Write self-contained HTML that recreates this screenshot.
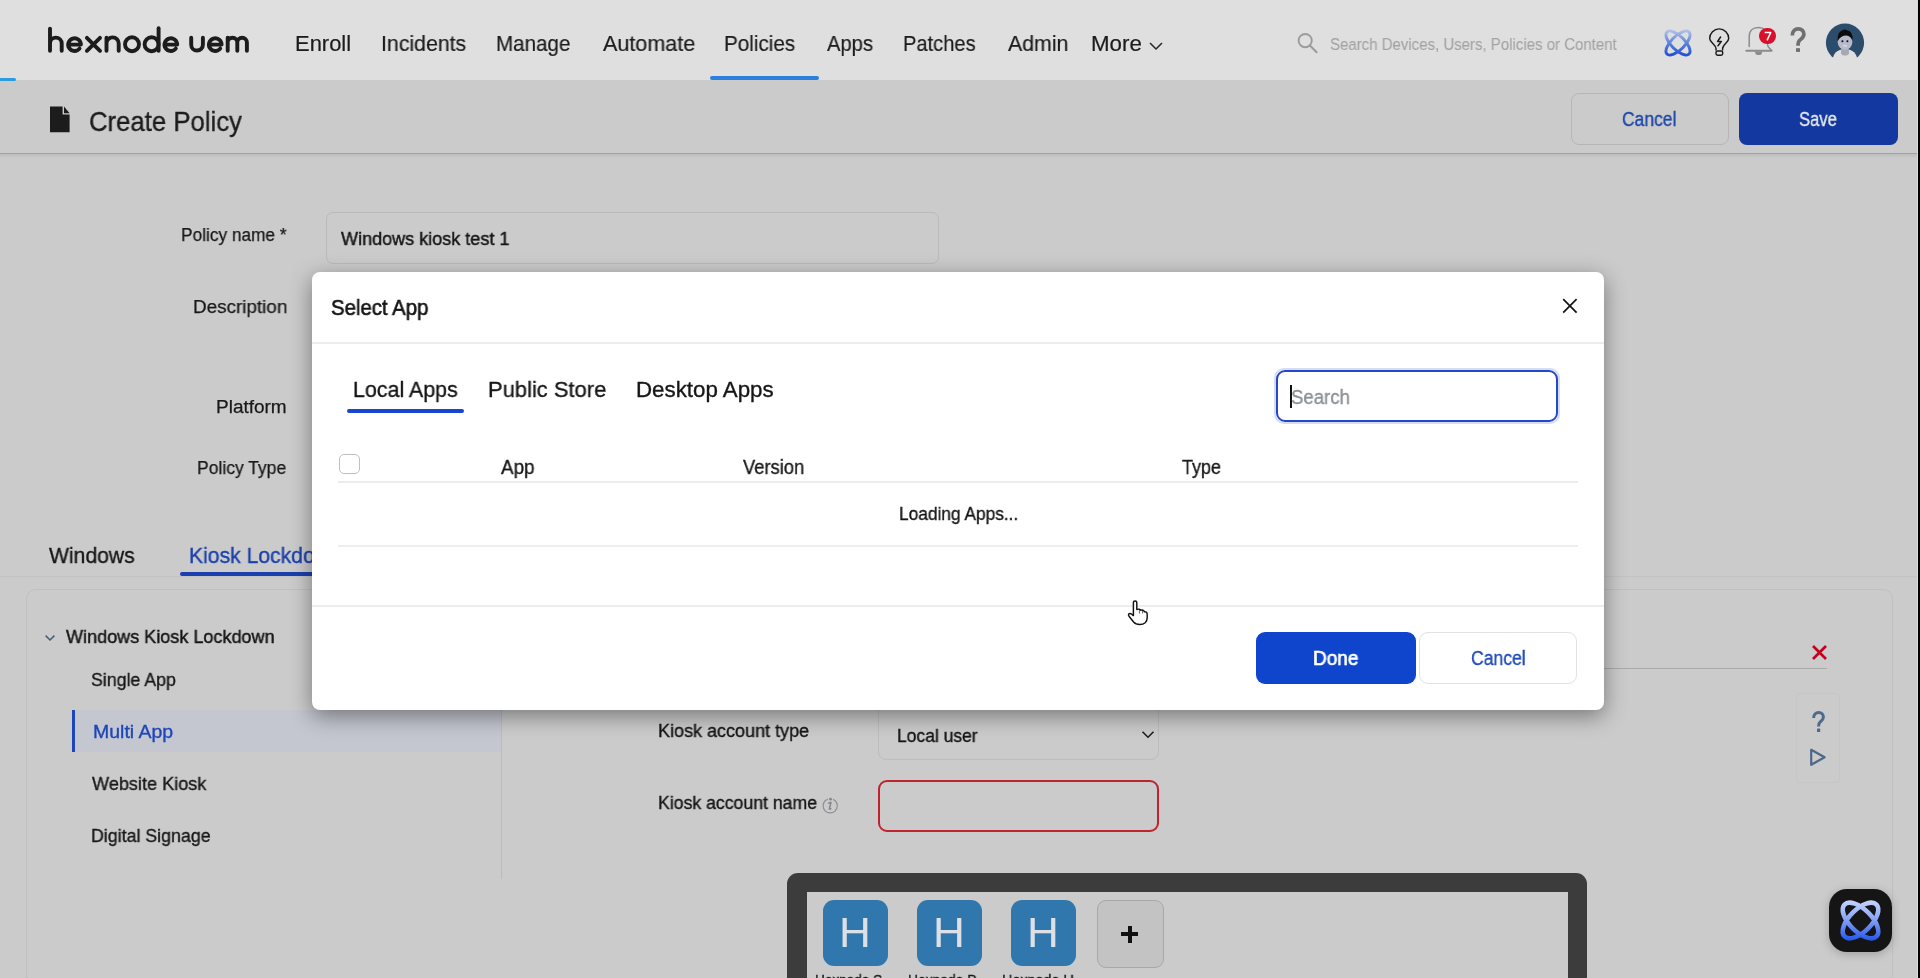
<!DOCTYPE html>
<html><head><meta charset="utf-8"><title>Create Policy</title>
<style>
html,body{margin:0;padding:0;}
body{width:1920px;height:978px;overflow:hidden;position:relative;background:#cbcbcb;font-family:"Liberation Sans",sans-serif;}
.a{position:absolute;box-sizing:border-box;}
.t{position:absolute;white-space:nowrap;line-height:1;transform-origin:0 0;font-family:"Liberation Sans",sans-serif;-webkit-text-stroke:0.35px currentColor;will-change:transform;}
</style></head><body>
<!-- header -->
<div class="a" style="left:0;top:0;width:1920px;height:80px;background:#dfdfdf"></div>
<div class="a" style="left:0;top:78px;width:16px;height:3px;background:#2f9ae0;border-radius:0 2px 2px 0"></div>
<div class="a" style="left:710px;top:76px;width:109px;height:4px;background:#2d80df;border-radius:2px"></div>
<svg style="position:absolute;left:0;top:0" width="260" height="80" viewBox="0 0 260 80">
<g fill="none" stroke="#1c1c1c" stroke-width="3.9" stroke-linecap="round" stroke-linejoin="round">
<path d="M50,28.6 V50.8 M50,43.45 A5.85,5.85 0 0 1 61.7,43.45 V50.8"/>
<path d="M68.2,44.6 H80.9 A6.35,6.35 0 1 0 79.5,48.6"/>
<path d="M86.9,37.8 L100,50.8 M100,37.8 L86.9,50.8"/>
<path d="M106.5,37.8 V50.8 M106.5,43.45 A6.1,6.1 0 0 1 118.7,43.45 V50.8"/>
<circle cx="132" cy="44.25" r="7.0"/>
<circle cx="151.6" cy="44.25" r="7.0"/>
<path d="M158.6,28.3 V50.8"/>
<path d="M164.5,44.6 H177.2 A6.35,6.35 0 1 0 175.8,48.6"/>
<path d="M191.2,37.8 V44.65 A5.85,5.85 0 0 0 202.9,44.65 V37.8"/>
<path d="M208.9,44.6 H221.6 A6.35,6.35 0 1 0 220.2,48.6"/>
<path d="M227.7,37.8 V50.8 M227.7,42.6 A4.8,4.8 0 0 1 237.3,42.6 V50.8 M237.3,42.6 A4.8,4.8 0 0 1 246.9,42.6 V50.8"/>
</g></svg>
<svg class="a" style="left:1146px;top:38px" width="20" height="16" viewBox="0 0 20 16"><path d="M4,5 L10,11 L16,5" fill="none" stroke="#262626" stroke-width="1.5"/></svg>
<svg class="a" style="left:1294px;top:29px" width="28" height="28" viewBox="0 0 28 28"><circle cx="11.2" cy="11.6" r="6.6" fill="none" stroke="#9c9c9c" stroke-width="1.9"/><path d="M16,16.6 L22.6,23.2" stroke="#9c9c9c" stroke-width="2.1" stroke-linecap="round"/></svg>
<!-- atom icon -->
<svg class="a" style="left:1662px;top:27px" width="32" height="32" viewBox="0 0 32 32">
<defs><linearGradient id="ag" gradientUnits="userSpaceOnUse" x1="0" y1="3" x2="0" y2="29"><stop offset="0" stop-color="#b3c3ea"/><stop offset="0.5" stop-color="#5d82dc"/><stop offset="1" stop-color="#1f4fd2"/></linearGradient>
<mask id="am" maskUnits="userSpaceOnUse" x="0" y="0" width="32" height="32"><g fill="none" stroke="#fff" stroke-width="2.9"><ellipse cx="16" cy="16" rx="15.6" ry="6.8" transform="rotate(45 16 16)"/><ellipse cx="16" cy="16" rx="15.6" ry="6.8" transform="rotate(-45 16 16)"/></g></mask></defs>
<rect x="0" y="0" width="32" height="32" fill="url(#ag)" mask="url(#am)"/></svg>
<!-- bulb -->
<svg class="a" style="left:1700px;top:22px" width="40" height="40" viewBox="0 0 40 40">
<path d="M16,28.6 V26.6 C16,24.4 14.8,23.4 12.6,21.2 C10.6,19.2 9.7,17.3 9.7,16.4 A9.5,9.5 0 1 1 28.7,16.4 C28.7,17.3 27.8,19.2 25.8,21.2 C23.6,23.4 22.6,24.4 22.6,26.6 V28.6" fill="none" stroke="#1a1a1a" stroke-width="1.45" stroke-linejoin="round"/>
<rect x="16" y="28.9" width="6.7" height="4.3" rx="1.6" fill="none" stroke="#1a1a1a" stroke-width="1.45"/>
<path d="M20.6,15 L17.6,19.4 H21.4 L18,23.8" fill="none" stroke="#1a1a1a" stroke-width="1.5" stroke-linejoin="round" stroke-linecap="round"/>
</svg>
<!-- bell -->
<svg class="a" style="left:1740px;top:22px" width="40" height="40" viewBox="0 0 40 40">
<path d="M9.2,24.4 V14.5 C9.2,8.6 13,5.4 18.4,5.4 C23.8,5.4 27.6,8.6 27.6,14.5 V23 C27.6,25.2 29.8,26.6 31.2,28" fill="none" stroke="#8c8c8c" stroke-width="1.5" stroke-linecap="round"/>
<path d="M6.3,28.8 H31.6" stroke="#8c8c8c" stroke-width="2" stroke-linecap="round"/>
<path d="M15,29.4 A3.6,3.6 0 0 0 22.2,29.4 Z" fill="#8c8c8c"/>
</svg>
<div class="a" style="left:1759.3px;top:27.5px;width:16.5px;height:16.5px;border-radius:50%;background:#d7102c"></div>
<svg class="a" style="left:1760px;top:28px" width="16" height="16" viewBox="0 0 16 16"><path d="M4.6,4.6 H10.7 L7,12.4" fill="none" stroke="#fafafa" stroke-width="1.5" stroke-linejoin="round"/></svg>
<svg class="a" style="left:1780px;top:22px" width="40" height="40" viewBox="0 0 40 40">
<path d="M12.3,13.6 C12.3,9.2 15,6.8 18.3,6.8 C21.7,6.8 23.9,9.1 23.9,12.3 C23.9,15.3 21.6,16.7 19.8,18.2 C18.5,19.3 18,20.6 18,23.8" fill="none" stroke="#707070" stroke-width="3.7"/>
<rect x="16" y="26.2" width="4" height="3.7" fill="#707070"/>
</svg>
<!-- avatar -->
<svg class="a" style="left:1820px;top:18px" width="50" height="50" viewBox="0 0 50 50">
<defs><clipPath id="avc"><circle cx="25" cy="24.7" r="19.1"/></clipPath></defs>
<circle cx="25" cy="24.7" r="19.1" fill="#2b4c6b"/>
<path d="M12.6,47 V43 Q13,31.5 25,31 Q37,31.5 37.4,43 V47 Z" fill="#dfdfdf"/>
<rect x="21" y="29.5" width="8" height="8" rx="3.2" fill="#a6a8b3"/>
<ellipse cx="25" cy="23.8" rx="7.4" ry="7.9" fill="#b7bacb"/>
<path d="M17.6,23.5 Q16.8,14.5 22,12.5 Q24.5,10.6 27,12.2 Q33.5,13 32.4,23 Q30.6,17.8 26.5,17.6 Q20.5,17.5 17.6,23.5 Z" fill="#0c0c0c"/>
<circle cx="22.4" cy="23.3" r="1.05" fill="#0c0c0c"/><circle cx="27.4" cy="23.3" r="1.05" fill="#0c0c0c"/>
<path d="M22.3,27.4 Q25,29.6 27.7,27.4 Z" fill="#f0f0f0"/>
</svg>

<!-- sub bar -->
<div class="a" style="left:0;top:153px;width:1920px;height:1px;background:#a3a3a3"></div>
<div class="a" style="left:0;top:154px;width:1920px;height:4px;background:linear-gradient(#bdbdbd,#cbcbcb)"></div>
<svg class="a" style="left:48px;top:104px" width="26" height="32" viewBox="0 0 26 32">
<path d="M2,2.5 H14.6 V10.5 H21.6 V28.2 H2 Z" fill="#1c1c1c"/><path d="M16,2.5 L21.6,9.2 H16 Z" fill="#1c1c1c"/></svg>
<div class="a" style="left:1571px;top:93px;width:158px;height:52px;border:1px solid #b6b6b6;border-radius:8px"></div>
<div class="a" style="left:1739px;top:93px;width:159px;height:52px;background:#1339a1;border-radius:8px"></div>

<!-- form -->
<div class="a" style="left:326px;top:212px;width:613px;height:52px;border:1px solid #bababa;border-radius:7px"></div>

<!-- tabs -->
<div class="a" style="left:0;top:576px;width:1920px;height:1px;background:#c3c3c3"></div>
<div class="a" style="left:180px;top:572px;width:150px;height:4px;background:#1b40ad;border-radius:2px"></div>

<!-- card -->
<div class="a" style="left:26px;top:589px;width:1867px;height:500px;border:1px solid #c0c0c0;border-radius:10px"></div>
<div class="a" style="left:72px;top:710px;width:429px;height:42px;background:#c4c6d0"></div>
<div class="a" style="left:72px;top:710px;width:2.6px;height:42px;background:#1d46b8"></div>
<div class="a" style="left:501px;top:590px;width:1px;height:289px;background:#bcbcbc"></div>
<svg class="a" style="left:42px;top:630px" width="16" height="16" viewBox="0 0 16 16"><path d="M3.6,5.6 L8,10 L12.4,5.6" fill="none" stroke="#4a5a78" stroke-width="1.5"/></svg>

<!-- right side -->
<div class="a" style="left:1300px;top:668px;width:527px;height:1px;background:#aaaaaa"></div>
<svg class="a" style="left:1808px;top:641px" width="22" height="22" viewBox="0 0 22 22"><path d="M5,5 L18,18 M18,5 L5,18" stroke="#c6001c" stroke-width="2.7"/></svg>
<div class="a" style="left:1796px;top:693px;width:44px;height:90px;border:1px solid #c6c6c6;border-radius:3px"></div>
<svg class="a" style="left:1800px;top:705px" width="36" height="32" viewBox="0 0 36 32">
<path d="M13.6,13 C13.6,9.6 15.8,7.6 18.6,7.6 C21.5,7.6 23.4,9.5 23.4,12.2 C23.4,14.6 21.6,15.8 20.1,17 C19,17.9 18.6,19 18.6,21.4" fill="none" stroke="#4e6a8d" stroke-width="3"/>
<rect x="17" y="23.6" width="3.2" height="3.4" rx="0.6" fill="#4e6a8d"/></svg>
<svg class="a" style="left:1806px;top:745px" width="24" height="24" viewBox="0 0 24 24"><path d="M5.2,4.8 L18.6,12.3 L5.2,19.8 Z" fill="none" stroke="#4d6789" stroke-width="2.2" stroke-linejoin="round"/></svg>

<!-- content -->
<div class="a" style="left:878px;top:700px;width:281px;height:60px;border:1px solid #bdbdbd;border-radius:8px"></div>
<svg class="a" style="left:1139px;top:727px" width="18" height="16" viewBox="0 0 18 16"><path d="M3.5,4.7 L9,10.2 L14.5,4.7" fill="none" stroke="#1e1e1e" stroke-width="1.6"/></svg>
<div class="a" style="left:878px;top:780px;width:281px;height:52px;border:2px solid #c2212e;border-radius:9px"></div>
<svg class="a" style="left:820px;top:795px" width="20" height="20" viewBox="0 0 20 20"><circle cx="10.2" cy="10.8" r="7.1" fill="none" stroke="#8e8e94" stroke-width="1.15"/><circle cx="10.4" cy="4" r="2.6" fill="#cbcbcb"/><circle cx="10.5" cy="4.2" r="1.4" fill="#86868c"/><path d="M8.6,8.2 Q10,7.3 11,7.5 L9.4,13.6 Q9.2,14.8 10.8,13.6" fill="none" stroke="#86868c" stroke-width="1.5" stroke-linecap="round" stroke-linejoin="round"/></svg>

<!-- device -->
<div class="a" style="left:787px;top:873px;width:800px;height:200px;background:#3c3c3c;border-radius:11px"></div>
<div class="a" style="left:807px;top:892px;width:761px;height:200px;background:#cbcbcb"></div>
<div class="a" style="left:823px;top:900px;width:65px;height:66px;background:#2f77ad;border-radius:11px"></div>
<div class="a" style="left:916.6px;top:900px;width:65px;height:66px;background:#2f77ad;border-radius:11px"></div>
<div class="a" style="left:1010.6px;top:900px;width:65px;height:66px;background:#2f77ad;border-radius:11px"></div>
<div class="a" style="left:1097px;top:900px;width:67px;height:68px;background:#c3c3c3;border:1.5px solid #a8a8a8;border-radius:9px"></div>
<div class="a" style="left:1121px;top:932.3px;width:17px;height:4px;background:#111"></div>
<div class="a" style="left:1127.5px;top:925.8px;width:4px;height:17px;background:#111"></div>

<!-- floating atom -->
<div class="a" style="left:1829px;top:889px;width:63px;height:63px;background:#151515;border-radius:18px;box-shadow:0 2px 10px rgba(0,0,0,0.22)"></div>
<svg class="a" style="left:1836px;top:896px" width="49" height="49" viewBox="0 0 49 49">
<defs><linearGradient id="fg" gradientUnits="userSpaceOnUse" x1="0" y1="4" x2="0" y2="45"><stop offset="0" stop-color="#c9d5ff"/><stop offset="0.45" stop-color="#8aa6f6"/><stop offset="1" stop-color="#2254ec"/></linearGradient>
<mask id="fm" maskUnits="userSpaceOnUse" x="0" y="0" width="49" height="49"><g fill="none" stroke="#fff" stroke-width="4.6"><ellipse cx="24.5" cy="24.5" rx="22.6" ry="11" transform="rotate(45 24.5 24.5)"/><ellipse cx="24.5" cy="24.5" rx="22.6" ry="11" transform="rotate(-45 24.5 24.5)"/></g></mask></defs>
<rect x="0" y="0" width="49" height="49" fill="url(#fg)" mask="url(#fm)"/></svg>

<!-- right edge -->
<div class="a" style="left:1917px;top:0;width:1px;height:978px;background:#dadada"></div>
<div class="a" style="left:1918px;top:0;width:2px;height:978px;background:#000"></div>

<div class="t" style="left:295.18px;top:32.77px;font-size:21.74px;color:#1c1c1c;font-weight:400;transform:scaleX(1.0096);-webkit-text-stroke:0.2px currentColor">Enroll</div>
<div class="t" style="left:381.04px;top:32.77px;font-size:21.74px;color:#1c1c1c;font-weight:400;transform:scaleX(0.9798);-webkit-text-stroke:0.2px currentColor">Incidents</div>
<div class="t" style="left:496.41px;top:32.77px;font-size:21.74px;color:#1c1c1c;font-weight:400;transform:scaleX(0.9474);-webkit-text-stroke:0.2px currentColor">Manage</div>
<div class="t" style="left:602.50px;top:32.77px;font-size:21.74px;color:#1c1c1c;font-weight:400;transform:scaleX(0.9913);-webkit-text-stroke:0.2px currentColor">Automate</div>
<div class="t" style="left:724.40px;top:32.77px;font-size:21.74px;color:#1c1c1c;font-weight:400;transform:scaleX(0.9500);-webkit-text-stroke:0.2px currentColor">Policies</div>
<div class="t" style="left:826.70px;top:32.77px;font-size:21.74px;color:#1c1c1c;font-weight:400;transform:scaleX(0.9286);-webkit-text-stroke:0.2px currentColor">Apps</div>
<div class="t" style="left:903.15px;top:32.77px;font-size:21.74px;color:#1c1c1c;font-weight:400;transform:scaleX(0.9250);-webkit-text-stroke:0.2px currentColor">Patches</div>
<div class="t" style="left:1007.50px;top:32.77px;font-size:21.74px;color:#1c1c1c;font-weight:400;transform:scaleX(0.9800);-webkit-text-stroke:0.2px currentColor">Admin</div>
<div class="t" style="left:1090.94px;top:32.77px;font-size:21.74px;color:#1c1c1c;font-weight:400;transform:scaleX(1.0277);-webkit-text-stroke:0.2px currentColor">More</div>
<div class="t" style="left:1330.12px;top:35.62px;font-size:17.1px;color:#a3a3a3;font-weight:400;transform:scaleX(0.8773);-webkit-text-stroke:0.1px currentColor">Search Devices, Users, Policies or Content</div>
<div class="t" style="left:88.58px;top:108.19px;font-size:27.83px;color:#1c1c1c;font-weight:400;transform:scaleX(0.9244)">Create Policy</div>
<div class="t" style="left:1622.02px;top:109.57px;font-size:19.86px;color:#1f47a8;font-weight:400;transform:scaleX(0.8800)">Cancel</div>
<div class="t" style="left:1799.36px;top:109.57px;font-size:19.86px;color:#e6e8ee;font-weight:400;transform:scaleX(0.8364)">Save</div>
<div class="t" style="left:180.79px;top:225.11px;font-size:18.99px;color:#181818;font-weight:400;transform:scaleX(0.9091);-webkit-text-stroke:0.25px currentColor">Policy name *</div>
<div class="t" style="left:192.91px;top:296.91px;font-size:18.99px;color:#181818;font-weight:400;transform:scaleX(0.9935);-webkit-text-stroke:0.25px currentColor">Description</div>
<div class="t" style="left:216.40px;top:397.01px;font-size:18.99px;color:#181818;font-weight:400;transform:scaleX(0.9986);-webkit-text-stroke:0.25px currentColor">Platform</div>
<div class="t" style="left:197.48px;top:458.31px;font-size:18.99px;color:#181818;font-weight:400;transform:scaleX(0.9221);-webkit-text-stroke:0.25px currentColor">Policy Type</div>
<div class="t" style="left:341.25px;top:229.11px;font-size:18.99px;color:#161616;font-weight:400;transform:scaleX(0.9500);-webkit-text-stroke:0.45px currentColor">Windows kiosk test 1</div>
<div class="t" style="left:48.80px;top:544.77px;font-size:21.74px;color:#161616;font-weight:400;transform:scaleX(0.9727)">Windows</div>
<div class="t" style="left:188.95px;top:544.77px;font-size:21.74px;color:#1b40ad;font-weight:400;transform:scaleX(0.9727)">Kiosk Lockdown</div>
<div class="t" style="left:65.50px;top:628.44px;font-size:18.84px;color:#161616;font-weight:400;transform:scaleX(0.9585);-webkit-text-stroke:0.45px currentColor">Windows Kiosk Lockdown</div>
<div class="t" style="left:90.66px;top:670.64px;font-size:18.84px;color:#181818;font-weight:400;transform:scaleX(0.9432)">Single App</div>
<div class="t" style="left:93.06px;top:722.94px;font-size:18.84px;color:#1d46b8;font-weight:400;transform:scaleX(1.0355)">Multi App</div>
<div class="t" style="left:91.60px;top:774.64px;font-size:18.84px;color:#181818;font-weight:400;transform:scaleX(0.9613)">Website Kiosk</div>
<div class="t" style="left:90.66px;top:827.04px;font-size:18.84px;color:#181818;font-weight:400;transform:scaleX(0.9440)">Digital Signage</div>
<div class="t" style="left:658.41px;top:722.43px;font-size:18.26px;color:#161616;font-weight:400;transform:scaleX(0.9862)">Kiosk account type</div>
<div class="t" style="left:658.43px;top:794.23px;font-size:18.26px;color:#161616;font-weight:400;transform:scaleX(0.9675)">Kiosk account name</div>
<div class="t" style="left:896.56px;top:726.68px;font-size:18.55px;color:#141414;font-weight:400;transform:scaleX(0.9429)">Local user</div>
<div class="t" style="left:814.71px;top:971.51px;font-size:15.22px;color:#181818;font-weight:400;transform:scaleX(0.8905)">Hexnode S</div>
<div class="t" style="left:908.49px;top:971.51px;font-size:15.22px;color:#181818;font-weight:400;transform:scaleX(0.9081)">Hexnode P</div>
<div class="t" style="left:1002.06px;top:971.51px;font-size:15.22px;color:#181818;font-weight:400;transform:scaleX(0.9419)">Hexnode U</div>
<div class="t" style="left:839.05px;top:911.72px;font-size:42.03px;color:#dde1e6;font-weight:400;transform:scaleX(1.0500);-webkit-text-stroke:0px currentColor">H</div>
<div class="t" style="left:932.65px;top:911.72px;font-size:42.03px;color:#dde1e6;font-weight:400;transform:scaleX(1.0500);-webkit-text-stroke:0px currentColor">H</div>
<div class="t" style="left:1026.65px;top:911.72px;font-size:42.03px;color:#dde1e6;font-weight:400;transform:scaleX(1.0500);-webkit-text-stroke:0px currentColor">H</div>
<!-- modal -->
<div class="a" style="left:312px;top:272px;width:1292px;height:438px;background:#fff;border-radius:8px;box-shadow:0 6px 22px rgba(0,0,0,0.42)"></div>
<div class="a" style="left:312px;top:342px;width:1292px;height:2px;background:#ececec"></div>
<svg class="a" style="left:1560px;top:296px" width="20" height="20" viewBox="0 0 20 20"><path d="M3.2,3.2 L16.6,16.6 M16.6,3.2 L3.2,16.6" stroke="#141414" stroke-width="1.7"/></svg>
<div class="a" style="left:347px;top:408.6px;width:117px;height:4px;background:#1a45d0;border-radius:2px"></div>
<div class="a" style="left:1274px;top:368px;width:286px;height:56px;border:2px solid #d4ddf7;border-radius:10px"></div>
<div class="a" style="left:1276px;top:370px;width:282px;height:52px;border:2px solid #2847c8;border-radius:9px;background:#fff"></div>
<div class="a" style="left:1290px;top:384.6px;width:2px;height:23px;background:#111"></div>
<div class="a" style="left:339px;top:454px;width:21px;height:20px;border:1px solid #c0c0c0;border-radius:5px"></div>
<div class="a" style="left:338px;top:481px;width:1240px;height:2px;background:#ececec"></div>
<div class="a" style="left:338px;top:545px;width:1240px;height:2px;background:#eeeeee"></div>
<div class="a" style="left:312px;top:605px;width:1292px;height:2px;background:#ececec"></div>
<div class="a" style="left:1256px;top:631.5px;width:160px;height:52.5px;background:#0f45cc;border-radius:9px"></div>
<div class="a" style="left:1419px;top:632px;width:158px;height:52px;border:1px solid #e2e2e2;border-radius:9px"></div>

<div class="t" style="left:331.16px;top:297.00px;font-size:21.59px;color:#141414;font-weight:400;transform:scaleX(0.9431);-webkit-text-stroke:0.6px currentColor">Select App</div>
<div class="t" style="left:352.58px;top:378.78px;font-size:22.32px;color:#161616;font-weight:400;transform:scaleX(0.9598)">Local Apps</div>
<div class="t" style="left:488.03px;top:378.78px;font-size:22.32px;color:#161616;font-weight:400;transform:scaleX(0.9831)">Public Store</div>
<div class="t" style="left:636.10px;top:378.78px;font-size:22.32px;color:#161616;font-weight:400;transform:scaleX(1.0000)">Desktop Apps</div>
<div class="t" style="left:1290.77px;top:386.65px;font-size:20.0px;color:#8a9196;font-weight:400;transform:scaleX(0.9295)">Search</div>
<div class="t" style="left:500.60px;top:457.60px;font-size:19.71px;color:#181818;font-weight:400;transform:scaleX(0.9559)">App</div>
<div class="t" style="left:742.80px;top:457.60px;font-size:19.71px;color:#181818;font-weight:400;transform:scaleX(0.9323)">Version</div>
<div class="t" style="left:1181.50px;top:457.60px;font-size:19.71px;color:#181818;font-weight:400;transform:scaleX(0.9119)">Type</div>
<div class="t" style="left:898.78px;top:505.24px;font-size:18.84px;color:#141414;font-weight:400;transform:scaleX(0.9189)">Loading Apps...</div>
<div class="t" style="left:1312.66px;top:648.82px;font-size:19.57px;color:#ffffff;font-weight:400;transform:scaleX(0.9682);-webkit-text-stroke:0.7px currentColor">Done</div>
<div class="t" style="left:1470.70px;top:648.82px;font-size:19.57px;color:#1f49b8;font-weight:400;transform:scaleX(0.8983)">Cancel</div>

<!-- cursor -->
<svg class="a" style="left:1126px;top:599px" width="24" height="28" viewBox="0 0 24 28">
<path d="M7.4,3.6 Q7.4,1.9 9.1,1.9 Q10.8,1.9 10.8,3.6 V10.6 Q11.8,9.9 13.1,10.2 Q14.4,10.5 14.7,11.3 Q15.8,10.8 17.1,11.3 Q18.2,11.8 18.4,12.7 Q19.6,12.5 20.5,13.3 Q21.2,14.1 21.2,15.8 V18.5 Q21.2,22 19.2,23.8 Q17.2,25.5 13.7,25.5 Q9.7,25.5 7.6,23 L3,17.2 Q2,15.8 2.8,14.9 Q3.8,14 5.2,14.8 L7.4,16.6 Z" fill="#fff" stroke="#111" stroke-width="1.45" stroke-linejoin="round"/>
<path d="M13.4,11.2 V14.5 M16.6,11.9 V14.5" stroke="#555" stroke-width="0.9"/>
</svg>
</body></html>
